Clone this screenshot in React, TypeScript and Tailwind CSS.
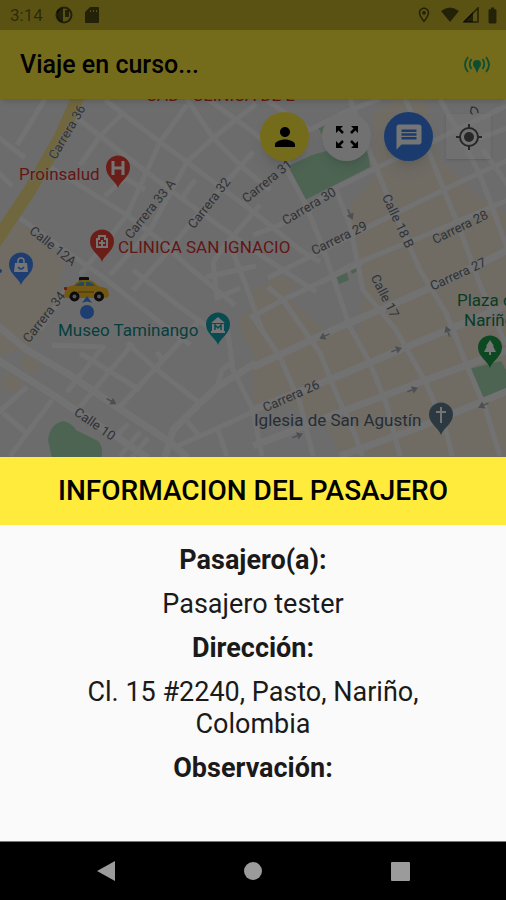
import type { ReactNode } from "react";
import { MdBatteryFull, MdMessage, MdOutlineLocationOn, MdPerson } from "react-icons/md";

const streets = [
  "M45 99 L17 145 M-2 137 L25 158 M-2 172 L12 186",
  "M70 112 L100 136 L157 180 L200 212 L256 252 L316 292",
  "M105 100 L160 142 L187 162 L227 192 L256 214 L300 250 L320 262",
  "M187 99 L213 138 L240 165 L270 190",
  "M205 97 L253 132 L290 165",
  "M187 105 L160 142 L127 215 L80 275",
  "M256 104 L213 138 L187 162 L150 230 L110 275",
  "M253 152 L200 212 L165 255 L133 290",
  "M123 113 L100 136 L80 165 M145 190 L125 178 L105 196",
  "M50 167 L127 215 L157 238 L190 268 L235 305",
  "M20 218 L50 240 L103 277 L157 320 L190 345",
  "M133 270 L180 307 L215 332 M195 180 L182 198",
  "M213 262 L217 298 L240 288 M206 277 L256 266",
  "M260 205 L225 245 L213 262",
  "M232 250 L245 283 L262 330",
  "M40 330 L66 290 M52 345 L103 347 L67 392",
  "M133 343 L80 407 M80 353 L140 390 M200 320 L117 410",
  "M127 343 L157 370 L200 403 M157 352 L163 362",
  "M227 327 L233 370 L253 410 L262 456 M217 387 L222 370 L232 362",
  "M253 412 L207 433 L175 447 M217 427 L227 456 M187 421 L200 437",
  "M27 387 L-2 413 M52 400 L10 456 M3 413 L25 432",
  "M140 432 L120 456 M128 424 L115 437 M148 438 L130 460",
  "M253 235 L280 225 L336 188 L376 168 L426 145 L506 106",
  "M268 278 L313 255 L386 218 L460 182 L508 160",
  "M320 283 L350 266 L426 235 L508 200",
  "M250 318 L283 300 L363 262",
  "M283 162 L306 205 L323 248 L350 327 L370 363 L386 403 L400 456",
  "M336 190 L350 225 L363 290 L396 330 L426 383 L446 430 L452 456",
  "M350 99 L376 168 L400 225 L420 270 L446 313 L466 363 L486 410 L500 456",
  "M405 99 L426 145 L444 190 L462 235 L480 285 L506 345",
  "M440 99 L460 135 L480 175 L495 215 L508 250",
  "M253 317 L280 357 L300 403 L313 456",
  "M268 287 L283 300 L320 353 L336 393 L356 437 L362 456",
  "M265 99 L310 130 L345 112 L380 99 M460 145 L508 128 M483 150 L508 185",
];

const avenues = [
  "M-2 326 L27 350 L67 373 L117 407 L167 440 L188 458",
  "M-2 360 L50 393 L80 413 L117 437 L148 458",
  "M256 363 L217 387 L190 413 L173 430 L165 458",
  "M253 367 L333 330 L410 297 L453 277 L508 250",
  "M253 410 L336 377 L416 343 L508 305",
  "M253 446 L346 410 L426 380 L508 350",
  "M340 456 L420 427 L508 391",
];

const streetLabels = [
  { text: "Carrera 36", x: 67, y: 132, angle: -60 },
  { text: "Carrera 33 A", x: 150, y: 209, angle: -51 },
  { text: "Carrera 32", x: 209, y: 203, angle: -52 },
  { text: "Carrera 31", x: 267, y: 181, angle: -39 },
  { text: "Carrera 30", x: 309, y: 206, angle: -31 },
  { text: "Carrera 29", x: 339, y: 238, angle: -26 },
  { text: "Calle 18 B", x: 398, y: 221, angle: 65 },
  { text: "Carrera 28", x: 460, y: 227, angle: -26 },
  { text: "Carrera 27", x: 458, y: 274, angle: -25 },
  { text: "Calle 17", x: 385, y: 296, angle: 63 },
  { text: "Carrera 26", x: 291, y: 396, angle: -24 },
  { text: "Calle 12A", x: 53, y: 246, angle: 38 },
  { text: "Carrera 34", x: 44, y: 317, angle: -52 },
  { text: "Calle 10", x: 95, y: 424, angle: 35 },
];

const placeLabels = [
  { text: "CAD - CLINICA DE L", x: 146, y: 101, fill: "#d8322e" },
  { text: "Proinsalud", x: 19, y: 180, fill: "#d8322e" },
  { text: "CLINICA SAN IGNACIO", x: 118, y: 253, fill: "#d8322e" },
  { text: "Museo Taminango", x: 58, y: 336, fill: "#0c8a85" },
  { text: "Plaza de", x: 457, y: 306, fill: "#188048" },
  { text: "Nariño", x: 464, y: 326, fill: "#188048" },
  { text: "Iglesia de San Agustín", x: 254, y: 426, fill: "#56646e" },
];

const arrows = [
  { x: 325, y: 336, angle: 155 },
  { x: 396, y: 350, angle: -20 },
  { x: 412, y: 390, angle: -20 },
  { x: 297, y: 436, angle: -20 },
  { x: 484, y: 405, angle: 155 },
  { x: 448, y: 332, angle: -110 },
  { x: 350, y: 214, angle: 65 },
  { x: 111, y: 401, angle: 30 },
];

function Pin({ x, y, fill, children }: { x: number; y: number; fill: string; children: ReactNode }) {
  return (
    <g transform={`translate(${x} ${y})`}>
      <path d="M0 0C-2-7-12-11-12-20.500a12 12 0 0 1 24 0C12-11 2-7 0 0Z" fill={fill} />
      <g transform="translate(0 -20)">{children}</g>
    </g>
  );
}

function Taxi() {
  return (
    <g transform="translate(64 277)">
      <rect x="15" y="0" width="10" height="4" rx="1" fill="#222" />
      <path d="M1 13Q1 10 5 9.500L10 8Q14 3 18 3H25Q29 3 34 9L42 11Q45 13 45 19L43 21H3L0 19Z" fill="#fbc02d" />
      <path d="M11 9Q14 5 18 5H20V9ZM22 5H25Q28 5 31 9H22Z" fill="#4fa3c9" />
      <path d="M14 14H30V16H14Z" fill="#c9951e" />
      <rect x="0" y="10" width="3" height="3" rx="1" fill="#e53935" />
      <circle cx="10.500" cy="19.500" r="5" fill="#1b1b1b" />
      <circle cx="10.500" cy="19.500" r="2" fill="#b5b5b5" />
      <circle cx="35" cy="19.500" r="5" fill="#1b1b1b" />
      <circle cx="35" cy="19.500" r="2" fill="#b5b5b5" />
    </g>
  );
}

function CityMap() {
  return (
    <svg
      viewBox="0 99 506 358"
      preserveAspectRatio="xMidYMin slice"
      className="absolute inset-0 h-full w-full font-['Roboto',sans-serif]"
      role="img"
      aria-label="Mapa"
    >
      <rect x="0" y="99" width="506" height="358" fill="#ebebed" />
      <g fill="#f3ebdb">
        <path d="M350 205L376 176L372 115L395 99H425L440 160L470 190L508 215V458H335L315 430L262 435L253 400V290L282 275L316 300L335 320L358 330L365 290L352 255Z" />
        <path d="M0 232L20 222L64 262L60 285L45 330L22 350L0 355Z" />
        <circle cx="31" cy="363" r="10" />
        <circle cx="12" cy="382" r="10" />
        <path d="M238 318L253 308V350L244 340Z" />
      </g>
      <g fill="#ebebed">
        <path d="M285 295L315 272L352 322L325 330Z" />
        <path d="M253 415L290 405L330 430L340 458H253Z" />
      </g>
      <g fill="#a8dab5">
        <path d="M288 166L312 155L366 140L370 167L305 200Z" />
        <path d="M317 125L345 112V125L322 135Z" />
        <path d="M469 369L501 361L506 370V392L481 398Z" />
        <path d="M48 440Q50 424 63 421Q72 423 76 430L98 441Q104 447 101 458H52Z" />
        <path d="M336 275L346 270L349 280L339 284ZM349 267L357 264L360 270L352 274Z" />
      </g>
      <g fill="none" stroke="#f9f9fb" strokeLinejoin="round">
        {streets.map((d) => (
          <path key={d} d={d} strokeWidth="5" />
        ))}
        {avenues.map((d) => (
          <path key={d} d={d} strokeWidth="7" />
        ))}
      </g>
      <path d="M79 95L60 138L30 190L-6 244" fill="none" stroke="#f3e08a" strokeWidth="13" />
      {arrows.map((a) => (
        <path
          key={`${a.x}-${a.y}`}
          d="M-5 0H4M1-2.500L5 0L1 2.500Z"
          transform={`translate(${a.x} ${a.y}) rotate(${a.angle})`}
          fill="#a9adb5"
          stroke="#a9adb5"
          strokeWidth="1.500"
        />
      ))}
      <path d="M478 113Q478 107 472 107Q469 112 473 115" fill="none" stroke="#74777c" strokeWidth="1.500" />
      <circle cx="0" cy="271" r="2" fill="#4285f4" />
      <g fontSize="13" fill="#6b6e73" textAnchor="middle" stroke="#f0f0f2" strokeWidth="1" paintOrder="stroke">
        {streetLabels.map((s) => (
          <text key={s.text} transform={`translate(${s.x} ${s.y}) rotate(${s.angle})`} dominantBaseline="central">
            {s.text}
          </text>
        ))}
      </g>
      <g fontSize="17" stroke="#f0f0f2" strokeWidth="1" paintOrder="stroke">
        {placeLabels.map((p) => (
          <text key={p.text} x={p.x} y={p.y} fill={p.fill}>
            {p.text}
          </text>
        ))}
      </g>
      <Pin x={118} y={188} fill="#ea4335">
        <path d="M-5-7V7M5-7V7M-5 0H5" stroke="#fff" strokeWidth="3" />
      </Pin>
      <Pin x={102} y={262} fill="#ea4335">
        <path d="M-6-3H-3V-6H3V-3H6M-5-3V5H5V-3" fill="none" stroke="#fff" strokeWidth="2" />
        <path d="M0-2V4M-3 1H3" stroke="#fff" strokeWidth="2" />
      </Pin>
      <Pin x={21} y={285} fill="#4285f4">
        <path d="M-6-2H6L7 7H-7Z" fill="#fff" />
        <path d="M-3-2V-4Q-3-7 0-7Q3-7 3-4V-2" fill="none" stroke="#fff" strokeWidth="1.500" />
        <path d="M-3 2Q0 6 3 2" fill="none" stroke="#4285f4" strokeWidth="1.500" />
      </Pin>
      <Pin x={218} y={345} fill="#12a4b0">
        <path d="M-7-2L0-8L7-2ZM-6-1H6V6H-6ZM-7 6H7V8H-7Z" fill="#fff" />
        <path d="M-3 5V0L0 3L3 0V5" fill="none" stroke="#12a4b0" strokeWidth="1.500" />
      </Pin>
      <Pin x={490} y={368} fill="#1e9e48">
        <path d="M0-8L4-2H3L6 4H1V7H-1V4H-6L-3-2H-4Z" fill="#fff" />
      </Pin>
      <Pin x={441} y={435} fill="#607d8b">
        <path d="M0-8V8M-5-3H5" stroke="#fff" strokeWidth="2" />
      </Pin>
      <Taxi />
      <path d="M87 296L92 303Q87 300 82 303Z" fill="#4285f4" />
      <circle cx="87" cy="312" r="7" fill="#4285f4" />
    </svg>
  );
}

function StatusBar() {
  return (
    <div className="flex h-[30px] items-center justify-between bg-[#c4b32b] pr-1 pl-2.5 text-black/60">
      <div className="flex items-center gap-3">
        <span className="text-[17px] leading-5 text-black/50">3:14</span>
        <svg viewBox="0 0 18 18" className="size-[18px]" aria-hidden="true">
          <circle cx="9" cy="9" r="7.500" fill="none" stroke="currentColor" strokeWidth="2" />
          <path d="M2 4L8 2V16L4 15L2 11ZM10 4H14V11H10Z" fill="currentColor" />
        </svg>
        <svg viewBox="0 0 14 16" className="h-4 w-3.5" aria-hidden="true">
          <path d="M5 0H13Q14 0 14 1V15Q14 16 13 16H1Q0 16 0 15V5ZM5 3V5H6V3ZM8 3V5H9V3ZM11 3V5H12V3Z" fill="currentColor" fillRule="evenodd" />
        </svg>
      </div>
      <div className="flex items-center">
        <MdOutlineLocationOn className="mr-2 size-[18px]" />
        <svg viewBox="0 0 18 16" className="mr-1 h-4 w-[18px]" aria-hidden="true">
          <path d="M0 4Q9-3 18 4L9 15Z" fill="currentColor" />
        </svg>
        <svg viewBox="0 0 16 16" className="mr-1 size-4" aria-hidden="true">
          <path d="M1 15L15 1V15Z" fill="none" stroke="currentColor" strokeWidth="1.500" />
          <path d="M0 15L10 5V15Z" fill="currentColor" />
        </svg>
        <MdBatteryFull className="size-[19px]" />
      </div>
    </div>
  );
}

function AppBar() {
  return (
    <header className="relative z-10 flex h-[69px] items-center justify-between bg-[#ffeb3b] pr-4 pl-5 shadow-md">
      <h1 className="text-[25px] leading-8 font-medium text-black">Viaje en curso...</h1>
      <svg viewBox="0 0 26 18" className="h-[18px] w-[26px] text-[#1fa86a]" aria-hidden="true">
        <circle cx="13" cy="8" r="4" fill="currentColor" />
        <path d="M10 10L13 17L16 10Z" fill="currentColor" />
        <path d="M7.500 3Q4 8 7.500 13M4 1Q-2 9 4 16M18.500 3Q22 8 18.500 13M22 1Q28 9 22 16" fill="none" stroke="currentColor" strokeWidth="1.800" />
      </svg>
    </header>
  );
}

function ExpandIcon() {
  return (
    <svg viewBox="0 0 22 22" className="size-[22px]" aria-hidden="true">
      <path d="M0 0H7L0 7ZM22 0V7L15 0ZM0 22V15L7 22ZM22 22H15L22 15Z" fill="currentColor" />
      <path d="M2 2L7 7M20 2L15 7M2 20L7 15M20 20L15 15" stroke="currentColor" strokeWidth="2.500" />
    </svg>
  );
}

function LocateIcon() {
  return (
    <svg viewBox="0 0 26 26" className="size-[26px]" aria-hidden="true">
      <circle cx="13" cy="13" r="9" fill="none" stroke="currentColor" strokeWidth="2" />
      <circle cx="13" cy="13" r="5" fill="currentColor" />
      <path d="M13 0V4M13 22V26M0 13H4M22 13H26" stroke="currentColor" strokeWidth="2" />
    </svg>
  );
}

function MapControls() {
  return (
    <div className="absolute top-[13px] right-[15px] flex items-center gap-[13px]">
      <button type="button" aria-label="Pasajero" className="flex size-[49px] items-center justify-center rounded-full bg-[#ffeb3b] text-black shadow-lg">
        <MdPerson className="size-[30px]" />
      </button>
      <button type="button" aria-label="Ampliar mapa" className="flex size-[49px] items-center justify-center rounded-full bg-[#f6f6f6] text-black shadow-lg">
        <ExpandIcon />
      </button>
      <button type="button" aria-label="Mensajes" className="flex size-[49px] items-center justify-center rounded-full bg-[#3b82f0] text-white shadow-lg">
        <MdMessage className="size-[30px]" />
      </button>
      <button type="button" aria-label="Mi ubicación" className="flex size-[45px] items-center justify-center bg-white/50 text-[#555] shadow-sm">
        <LocateIcon />
      </button>
    </div>
  );
}

function PassengerSheet() {
  return (
    <section className="bg-[#fafafa] text-center text-[27px] leading-8 text-[#1a1a1a]">
      <h2 className="bg-[#ffeb3b] py-[18px] text-[28px] leading-8 font-medium text-black">INFORMACION DEL PASAJERO</h2>
      <dl className="flex flex-col gap-3 px-16 pt-[19px] pb-[57px]">
        <dt className="font-bold">Pasajero(a):</dt>
        <dd>Pasajero tester</dd>
        <dt className="font-bold">Dirección:</dt>
        <dd>Cl. 15 #2240, Pasto, Nariño, Colombia</dd>
        <dt className="font-bold">Observación:</dt>
      </dl>
    </section>
  );
}

function SystemNav() {
  return (
    <nav className="flex h-[59px] items-center border-t border-[#777] bg-black px-8 text-[#9b9b9b]">
      <button type="button" aria-label="Atrás" className="flex flex-1 justify-center">
        <svg viewBox="0 0 20 20" className="size-5" fill="currentColor">
          <path d="M1 10L19 0V20Z" />
        </svg>
      </button>
      <button type="button" aria-label="Inicio" className="flex flex-1 justify-center">
        <span className="size-[18px] rounded-full bg-current" />
      </button>
      <button type="button" aria-label="Recientes" className="flex flex-1 justify-center">
        <span className="size-[19px] rounded-[1px] bg-current" />
      </button>
    </nav>
  );
}

export default function App() {
  return (
    <div className="flex min-h-screen flex-col bg-black font-['Roboto',sans-serif]">
      <div className="relative flex flex-1 flex-col">
        <StatusBar />
        <AppBar />
        <main className="relative min-h-72 flex-1 overflow-hidden">
          <CityMap />
          <MapControls />
        </main>
        <div className="absolute inset-0 z-20 bg-black/54" />
      </div>
      <PassengerSheet />
      <SystemNav />
    </div>
  );
}
